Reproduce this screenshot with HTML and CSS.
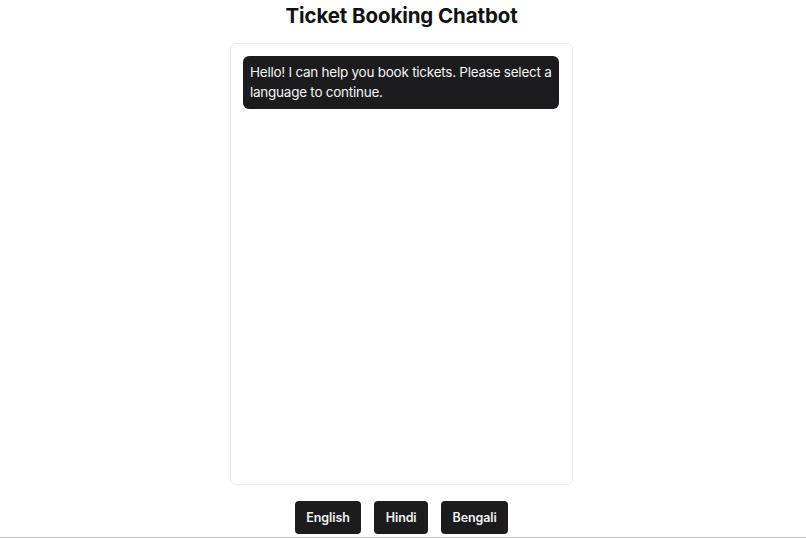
FILE: index.html
```html
<!DOCTYPE html>
<html>
<head>
<meta charset="utf-8">
<link rel="stylesheet" href="styles.css">
</head>
<body>
<div class="page">
  <h1 class="title">Ticket Booking Chatbot</h1>
  <div class="chat">
    <div class="bubble">Hello! I can help you book tickets. Please select a language to continue.</div>
  </div>
  <div class="options">
    <button class="opt">English</button>
    <button class="opt">Hindi</button>
    <button class="opt">Bengali</button>
  </div>
</div>
<div class="rule"></div>
</body>
</html>
```

FILE: styles.css
```css
html, body {
  margin: 0;
  padding: 0;
  background: #ffffff;
  overflow: hidden;
}
.page {
  display: flex;
  flex-direction: column;
  align-items: center;
  padding-right: 3px;
  font-family: "Inter", "Liberation Sans", sans-serif;
  color: #111;
}
.title {
  margin: 4px 0 0;
  font-size: 20.5px;
  line-height: 24px;
  font-weight: 700;
  letter-spacing: -0.1px;
}
.chat {
  margin-top: 15px;
  width: 343px;
  height: 442px;
  box-sizing: border-box;
  border: 1px solid #e9e9e9;
  border-radius: 6px;
  padding: 12px 13px 12px 12px;
}
.bubble {
  background: #1c1c1e;
  color: #f4f4f4;
  border-radius: 6px;
  padding: 6px 7px 7px;
  font-size: 13.5px;
  line-height: 20px;
  letter-spacing: -0.25px;
}
.options {
  margin-top: 16px;
  display: flex;
  gap: 13px;
}
.opt {
  background: #1c1c1e;
  color: #f2f2f2;
  border: none;
  border-radius: 4px;
  height: 33px;
  padding: 0 11.5px;
  font-family: "Inter", "Liberation Sans", sans-serif;
  font-size: 12.5px;
  font-weight: 600;
  letter-spacing: -0.1px;
}
.rule {
  margin-top: 3px;
  border-top: 1px solid #bdbdbd;
}
```
